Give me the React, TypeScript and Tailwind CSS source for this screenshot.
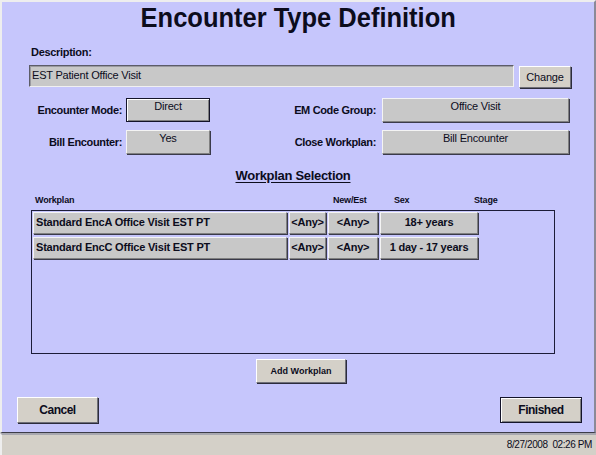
const F = "font-['Liberation_Sans',Arial,sans-serif]";

const raised =
  "bg-[#d4d0c8] border border-t-white border-l-white border-r-[#6f6f78] border-b-[#6f6f78] shadow-[1px_1px_0_#2c2c3c]";
const field =
  "bg-[#c8c8c8] border border-t-[#f4f4f4] border-l-[#f4f4f4] border-r-[#808080] border-b-[#808080] shadow-[1px_1px_0_#3a3a4a]";

const rows = [
  { name: "Standard EncA Office Visit EST PT", ne: "<Any>", sex: "<Any>", stage: "18+ years" },
  { name: "Standard EncC Office Visit EST PT", ne: "<Any>", sex: "<Any>", stage: "1 day - 17 years" },
];

function Label({ w, children }: { w: string; children: React.ReactNode }) {
  return (
    <div className={`${w} flex items-center justify-end whitespace-nowrap text-[11px] font-bold leading-none tracking-[-0.35px]`}>
      {children}
    </div>
  );
}

export default function App() {
  return (
    <div className={`w-[596px] h-[455px] bg-[#d4d0c8] flex flex-col text-[#0c0c1c] ${F}`}>
      <div className="h-[433px] bg-[#c6c6fc] border-l-2 border-t-2 border-l-[#eeeeee] border-t-[#eeeeee] border-r-2 border-r-[#8a8a98] border-b border-b-[#3c3c48] flex flex-col">
        <h1 className="mt-[2px] h-[28px] text-center text-[28px] font-bold leading-none">
          <span className="inline-block scale-x-[0.91]">Encounter Type Definition</span>
        </h1>

        <div className="pl-[27px] pr-[23px]">
          {/* Description */}
          <div className="mt-[15px] pl-[2px] text-[11px] font-bold leading-none tracking-[-0.3px]">Description:</div>
          <div className="mt-[7px] flex items-start gap-[5px]">
            <div className="flex-1 h-[22px] bg-[#c8c8c8] border border-t-[#5c5c68] border-l-[#5c5c68] border-r-[#f0f0f0] border-b-[#f0f0f0] shadow-[inset_1px_1px_0_#9a9aa0] pl-[2px] pt-[4px] text-[11px] leading-none tracking-[-0.2px]">
              EST Patient Office Visit
            </div>
            <button className={`${raised} mt-[1px] w-[52px] h-[22px] text-[11px] leading-none tracking-[-0.2px]`}>Change</button>
          </div>

          {/* Mode / EM code */}
          <div className="mt-[10px] flex h-[24px]">
            <Label w="w-[93px]">Encounter Mode:</Label>
            <div className="ml-[4px] w-[84px] h-[24px] bg-[#c8c8c8] border border-[#14142a] shadow-[inset_1px_1px_0_#ffffff,inset_-1px_-1px_0_#808080] text-center text-[11px] leading-none pt-[2px] tracking-[-0.2px]">
              Direct
            </div>
            <Label w="w-[166px]">EM Code Group:</Label>
            <div className={`${field} ml-[6px] w-[187px] h-[24px] text-center text-[11px] leading-none pt-[2px] tracking-[-0.2px]`}>Office Visit</div>
          </div>

          {/* Bill / Close */}
          <div className="mt-[8px] flex h-[24px]">
            <Label w="w-[93px]">Bill Encounter:</Label>
            <div className={`${field} ml-[4px] w-[84px] h-[24px] text-center text-[11px] leading-none pt-[2px] tracking-[-0.2px]`}>Yes</div>
            <Label w="w-[166px]">Close Workplan:</Label>
            <div className={`${field} ml-[6px] w-[187px] h-[24px] text-center text-[11px] leading-none pt-[2px] tracking-[-0.2px]`}>Bill Encounter</div>
          </div>

          {/* Workplan selection */}
          <div className="ml-[2px] w-[524px]">
            <div className="mt-[15px] text-center text-[13px] font-bold leading-none underline underline-offset-2 tracking-[-0.3px]">
              Workplan Selection
            </div>
            <div className="mt-[14px] flex text-[9px] font-bold leading-none tracking-[-0.2px]">
              <span className="w-[302px] pl-[4px]">Workplan</span>
              <span className="w-[61px]">New/Est</span>
              <span className="w-[80px]">Sex</span>
              <span>Stage</span>
            </div>
            <div className="mt-[5px] h-[144px] border border-[#1c1c38] pl-[1px] pt-[1px] flex flex-col gap-[3px]">
              {rows.map((r) => (
                <div key={r.name} className="flex gap-[2px] h-[22px] text-[11px] font-bold leading-none tracking-[-0.2px]">
                  <div className={`${field} w-[254px] pl-[2px] pt-[4px]`}>{r.name}</div>
                  <div className={`${field} w-[37px] text-center pt-[4px]`}>{r.ne}</div>
                  <div className={`${field} w-[50px] text-center pt-[4px]`}>{r.sex}</div>
                  <div className={`${field} w-[98px] text-center pt-[4px]`}>{r.stage}</div>
                </div>
              ))}
            </div>
            <div className="mt-[5px] flex justify-center">
              <button className={`${raised} ml-[16px] w-[90px] h-[24px] text-[9px] font-bold leading-none`}>Add Workplan</button>
            </div>
          </div>
        </div>

        {/* Footer buttons */}
        <div className="mt-[14px] flex justify-between pl-[15px] pr-[12px]">
          <button className={`${raised} w-[81px] h-[26px] text-[12px] font-bold leading-none tracking-[-0.5px]`}>Cancel</button>
          <button className="w-[82px] h-[26px] bg-[#d4d0c8] border border-[#14142a] shadow-[inset_1px_1px_0_#ffffff,inset_-1px_-1px_0_#808080] text-[12px] font-bold leading-none tracking-[-0.5px]">
            Finished
          </button>
        </div>
      </div>

      {/* Status bar */}
      <div className="flex-1 border-t-2 border-t-[#a8a8b0] border-l-2 border-l-[#eeeeee] flex items-center justify-end pr-[4px] text-[10px] leading-none tracking-[-0.4px]">
        8/27/2008&nbsp;&nbsp;02:26 PM
      </div>
    </div>
  );
}
